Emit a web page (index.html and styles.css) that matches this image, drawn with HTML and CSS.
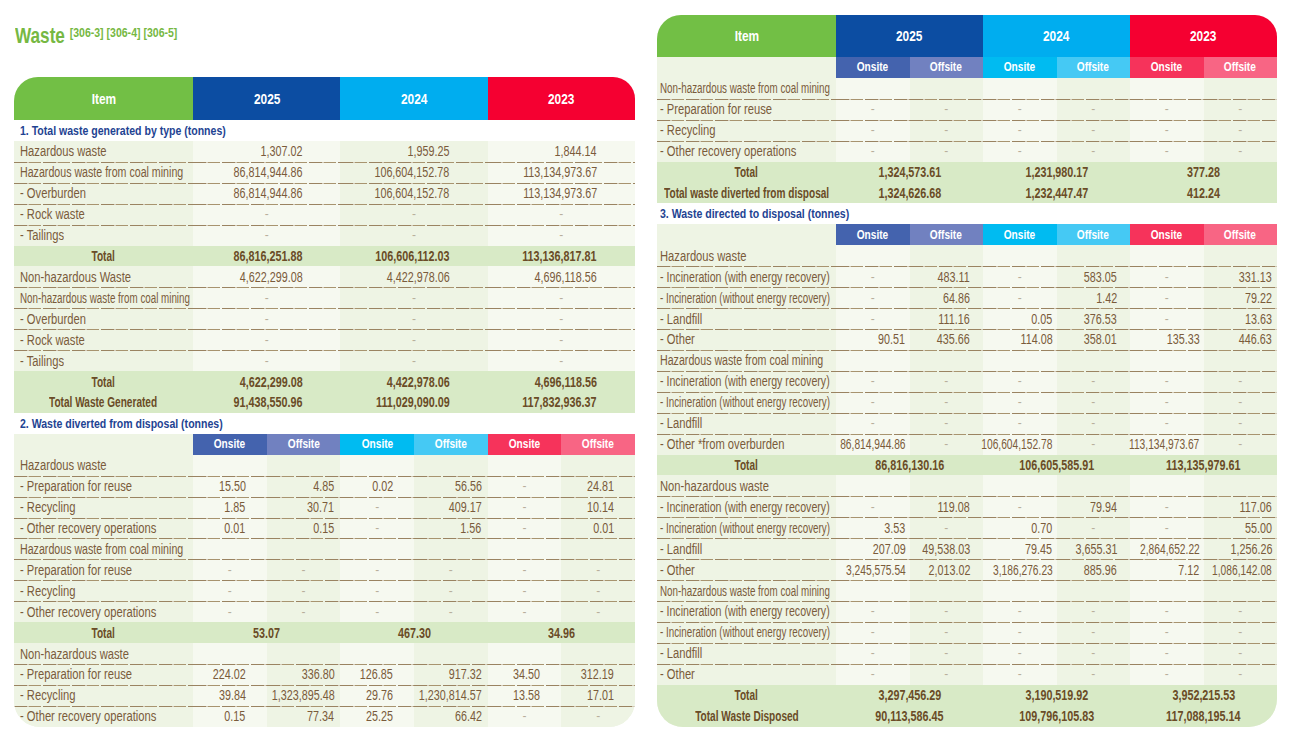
FILE: index.html
```html
<!DOCTYPE html>
<html lang="en">
<head>
<meta charset="utf-8">
<title>Waste</title>
<link rel="stylesheet" href="styles.css">
</head>
<body>
<div class="page">
  <div class="left">
    <h1 class="title"><span>Waste <small class="refs">[306-3] [306-4] [306-5]</small></span></h1>
    <div class="tbl tl">
      <div class="r hd">
        <div class="c hi"><span>Item</span></div><div class="c s2 y25"><span>2025</span></div><div class="c s2 y24"><span>2024</span></div><div class="c s2 y23"><span>2023</span></div>
      </div>
      <div class="r sec"><div class="c s7"><span>1. Total waste generated by type (tonnes)</span></div></div>
      <div class="r d"><div class="c it"><span>Hazardous waste</span></div><div class="c s2 l n1"><span>1,307.02</span></div><div class="c s2 k n1"><span>1,959.25</span></div><div class="c s2 l n1"><span>1,844.14</span></div></div>
      <div class="r d"><div class="c it sq2"><span>Hazardous waste from coal mining</span></div><div class="c s2 l n1"><span>86,814,944.86</span></div><div class="c s2 k n1"><span>106,604,152.78</span></div><div class="c s2 l n1"><span>113,134,973.67</span></div></div>
      <div class="r d"><div class="c it"><span>- Overburden</span></div><div class="c s2 l n1"><span>86,814,944.86</span></div><div class="c s2 k n1"><span>106,604,152.78</span></div><div class="c s2 l n1"><span>113,134,973.67</span></div></div>
      <div class="r d"><div class="c it"><span>- Rock waste</span></div><div class="c s2 l z">-</div><div class="c s2 k z">-</div><div class="c s2 l z">-</div></div>
      <div class="r d"><div class="c it"><span>- Tailings</span></div><div class="c s2 l z">-</div><div class="c s2 k z">-</div><div class="c s2 l z">-</div></div>
      <div class="r t"><div class="c it"><span>Total</span></div><div class="c s2 n1"><span>86,816,251.88</span></div><div class="c s2 n1"><span>106,606,112.03</span></div><div class="c s2 n1"><span>113,136,817.81</span></div></div>
      <div class="r d"><div class="c it"><span>Non-hazardous Waste</span></div><div class="c s2 l n1"><span>4,622,299.08</span></div><div class="c s2 k n1"><span>4,422,978.06</span></div><div class="c s2 l n1"><span>4,696,118.56</span></div></div>
      <div class="r d"><div class="c it sq"><span>Non-hazardous waste from coal mining</span></div><div class="c s2 l z">-</div><div class="c s2 k z">-</div><div class="c s2 l z">-</div></div>
      <div class="r d"><div class="c it"><span>- Overburden</span></div><div class="c s2 l z">-</div><div class="c s2 k z">-</div><div class="c s2 l z">-</div></div>
      <div class="r d"><div class="c it"><span>- Rock waste</span></div><div class="c s2 l z">-</div><div class="c s2 k z">-</div><div class="c s2 l z">-</div></div>
      <div class="r d"><div class="c it"><span>- Tailings</span></div><div class="c s2 l z">-</div><div class="c s2 k z">-</div><div class="c s2 l z">-</div></div>
      <div class="r t"><div class="c it"><span>Total</span></div><div class="c s2 n1"><span>4,622,299.08</span></div><div class="c s2 n1"><span>4,422,978.06</span></div><div class="c s2 n1"><span>4,696,118.56</span></div></div>
      <div class="r t"><div class="c it"><span>Total Waste Generated</span></div><div class="c s2 n1"><span>91,438,550.96</span></div><div class="c s2 n1"><span>111,029,090.09</span></div><div class="c s2 n1"><span>117,832,936.37</span></div></div>
      <div class="r sec"><div class="c s7"><span>2. Waste diverted from disposal (tonnes)</span></div></div>
      <div class="r sub"><div class="c it"></div><div class="c on25"><span>Onsite</span></div><div class="c off25"><span>Offsite</span></div><div class="c on24"><span>Onsite</span></div><div class="c off24"><span>Offsite</span></div><div class="c on23"><span>Onsite</span></div><div class="c off23"><span>Offsite</span></div></div>
      <div class="r d"><div class="c it"><span>Hazardous waste</span></div><div class="c l"></div><div class="c k"></div><div class="c l"></div><div class="c k"></div><div class="c l"></div><div class="c k"></div></div>
      <div class="r d"><div class="c it"><span>- Preparation for reuse</span></div><div class="c l pa"><span>15.50</span></div><div class="c k pb"><span>4.85</span></div><div class="c l pa"><span>0.02</span></div><div class="c k pb"><span>56.56</span></div><div class="c l z">-</div><div class="c k pa"><span>24.81</span></div></div>
      <div class="r d"><div class="c it"><span>- Recycling</span></div><div class="c l pa"><span>1.85</span></div><div class="c k pb"><span>30.71</span></div><div class="c l z">-</div><div class="c k pb"><span>409.17</span></div><div class="c l z">-</div><div class="c k pa"><span>10.14</span></div></div>
      <div class="r d"><div class="c it"><span>- Other recovery operations</span></div><div class="c l pa"><span>0.01</span></div><div class="c k pb"><span>0.15</span></div><div class="c l z">-</div><div class="c k pb"><span>1.56</span></div><div class="c l z">-</div><div class="c k pa"><span>0.01</span></div></div>
      <div class="r d"><div class="c it sq2"><span>Hazardous waste from coal mining</span></div><div class="c l"></div><div class="c k"></div><div class="c l"></div><div class="c k"></div><div class="c l"></div><div class="c k"></div></div>
      <div class="r d"><div class="c it"><span>- Preparation for reuse</span></div><div class="c l z">-</div><div class="c k z">-</div><div class="c l z">-</div><div class="c k z">-</div><div class="c l z">-</div><div class="c k z">-</div></div>
      <div class="r d"><div class="c it"><span>- Recycling</span></div><div class="c l z">-</div><div class="c k z">-</div><div class="c l z">-</div><div class="c k z">-</div><div class="c l z">-</div><div class="c k z">-</div></div>
      <div class="r d"><div class="c it"><span>- Other recovery operations</span></div><div class="c l z">-</div><div class="c k z">-</div><div class="c l z">-</div><div class="c k z">-</div><div class="c l z">-</div><div class="c k z">-</div></div>
      <div class="r t"><div class="c it"><span>Total</span></div><div class="c s2 ctr"><span>53.07</span></div><div class="c s2 ctr"><span>467.30</span></div><div class="c s2 ctr"><span>34.96</span></div></div>
      <div class="r d"><div class="c it"><span>Non-hazardous waste</span></div><div class="c l"></div><div class="c k"></div><div class="c l"></div><div class="c k"></div><div class="c l"></div><div class="c k"></div></div>
      <div class="r d"><div class="c it"><span>- Preparation for reuse</span></div><div class="c l pa"><span>224.02</span></div><div class="c k pb"><span>336.80</span></div><div class="c l pa"><span>126.85</span></div><div class="c k pb"><span>917.32</span></div><div class="c l pa"><span>34.50</span></div><div class="c k pa"><span>312.19</span></div></div>
      <div class="r d"><div class="c it"><span>- Recycling</span></div><div class="c l pa"><span>39.84</span></div><div class="c k pb"><span>1,323,895.48</span></div><div class="c l pa"><span>29.76</span></div><div class="c k pb"><span>1,230,814.57</span></div><div class="c l pa"><span>13.58</span></div><div class="c k pa"><span>17.01</span></div></div>
      <div class="r d"><div class="c it"><span>- Other recovery operations</span></div><div class="c l pa"><span>0.15</span></div><div class="c k pb"><span>77.34</span></div><div class="c l pa"><span>25.25</span></div><div class="c k pb"><span>66.42</span></div><div class="c l z">-</div><div class="c k z">-</div></div>
    </div>
  </div>

  <div class="right">
    <div class="tbl tr">
      <div class="r hd hd2">
        <div class="c hi"><span>Item</span></div><div class="c s2 y25"><span>2025</span></div><div class="c s2 y24"><span>2024</span></div><div class="c s2 y23"><span>2023</span></div>
      </div>
      <div class="r sub"><div class="c it"></div><div class="c on25"><span>Onsite</span></div><div class="c off25"><span>Offsite</span></div><div class="c on24"><span>Onsite</span></div><div class="c off24"><span>Offsite</span></div><div class="c on23"><span>Onsite</span></div><div class="c off23"><span>Offsite</span></div></div>
      <div class="r d"><div class="c it sq"><span>Non-hazardous waste from coal mining</span></div><div class="c l"></div><div class="c k"></div><div class="c l"></div><div class="c k"></div><div class="c l"></div><div class="c k"></div></div>
      <div class="r d"><div class="c it"><span>- Preparation for reuse</span></div><div class="c l z">-</div><div class="c k z">-</div><div class="c l z">-</div><div class="c k z">-</div><div class="c l z">-</div><div class="c k z">-</div></div>
      <div class="r d"><div class="c it"><span>- Recycling</span></div><div class="c l z">-</div><div class="c k z">-</div><div class="c l z">-</div><div class="c k z">-</div><div class="c l z">-</div><div class="c k z">-</div></div>
      <div class="r d"><div class="c it"><span>- Other recovery operations</span></div><div class="c l z">-</div><div class="c k z">-</div><div class="c l z">-</div><div class="c k z">-</div><div class="c l z">-</div><div class="c k z">-</div></div>
      <div class="r t"><div class="c it"><span>Total</span></div><div class="c s2 ctr"><span>1,324,573.61</span></div><div class="c s2 ctr"><span>1,231,980.17</span></div><div class="c s2 ctr"><span>377.28</span></div></div>
      <div class="r t"><div class="c it"><span>Total waste diverted from disposal</span></div><div class="c s2 ctr"><span>1,324,626.68</span></div><div class="c s2 ctr"><span>1,232,447.47</span></div><div class="c s2 ctr"><span>412.24</span></div></div>
      <div class="r sec"><div class="c s7"><span>3. Waste directed to disposal (tonnes)</span></div></div>
      <div class="r sub"><div class="c it"></div><div class="c on25"><span>Onsite</span></div><div class="c off25"><span>Offsite</span></div><div class="c on24"><span>Onsite</span></div><div class="c off24"><span>Offsite</span></div><div class="c on23"><span>Onsite</span></div><div class="c off23"><span>Offsite</span></div></div>
      <div class="r d"><div class="c it"><span>Hazardous waste</span></div><div class="c l"></div><div class="c k"></div><div class="c l"></div><div class="c k"></div><div class="c l"></div><div class="c k"></div></div>
      <div class="r d"><div class="c it sq2"><span>- Incineration (with energy recovery)</span></div><div class="c l z">-</div><div class="c k pd"><span>483.11</span></div><div class="c l z">-</div><div class="c k pd"><span>583.05</span></div><div class="c l z">-</div><div class="c k pe"><span>331.13</span></div></div>
      <div class="r d"><div class="c it sq"><span>- Incineration (without energy recovery)</span></div><div class="c l z">-</div><div class="c k pd"><span>64.86</span></div><div class="c l z">-</div><div class="c k pd"><span>1.42</span></div><div class="c l z">-</div><div class="c k pe"><span>79.22</span></div></div>
      <div class="r d"><div class="c it"><span>- Landfill</span></div><div class="c l z">-</div><div class="c k pd"><span>111.16</span></div><div class="c l pc"><span>0.05</span></div><div class="c k pd"><span>376.53</span></div><div class="c l z">-</div><div class="c k pe"><span>13.63</span></div></div>
      <div class="r d"><div class="c it"><span>- Other</span></div><div class="c l pc"><span>90.51</span></div><div class="c k pd"><span>435.66</span></div><div class="c l pc"><span>114.08</span></div><div class="c k pd"><span>358.01</span></div><div class="c l pc"><span>135.33</span></div><div class="c k pe"><span>446.63</span></div></div>
      <div class="r d"><div class="c it sq2"><span>Hazardous waste from coal mining</span></div><div class="c l"></div><div class="c k"></div><div class="c l"></div><div class="c k"></div><div class="c l"></div><div class="c k"></div></div>
      <div class="r d"><div class="c it sq2"><span>- Incineration (with energy recovery)</span></div><div class="c l z">-</div><div class="c k z">-</div><div class="c l z">-</div><div class="c k z">-</div><div class="c l z">-</div><div class="c k z">-</div></div>
      <div class="r d"><div class="c it sq"><span>- Incineration (without energy recovery)</span></div><div class="c l z">-</div><div class="c k z">-</div><div class="c l z">-</div><div class="c k z">-</div><div class="c l z">-</div><div class="c k z">-</div></div>
      <div class="r d"><div class="c it"><span>- Landfill</span></div><div class="c l z">-</div><div class="c k z">-</div><div class="c l z">-</div><div class="c k z">-</div><div class="c l z">-</div><div class="c k z">-</div></div>
      <div class="r d"><div class="c it"><span>- Other *from overburden</span></div><div class="c l pc nq"><span>86,814,944.86</span></div><div class="c k z">-</div><div class="c l pc nq"><span>106,604,152.78</span></div><div class="c k z">-</div><div class="c l pc nq"><span>113,134,973.67</span></div><div class="c k z">-</div></div>
      <div class="r t"><div class="c it"><span>Total</span></div><div class="c s2 ctr"><span>86,816,130.16</span></div><div class="c s2 ctr"><span>106,605,585.91</span></div><div class="c s2 ctr"><span>113,135,979.61</span></div></div>
      <div class="r d"><div class="c it"><span>Non-hazardous waste</span></div><div class="c l"></div><div class="c k"></div><div class="c l"></div><div class="c k"></div><div class="c l"></div><div class="c k"></div></div>
      <div class="r d"><div class="c it sq2"><span>- Incineration (with energy recovery)</span></div><div class="c l z">-</div><div class="c k pd"><span>119.08</span></div><div class="c l z">-</div><div class="c k pd"><span>79.94</span></div><div class="c l z">-</div><div class="c k pe"><span>117.06</span></div></div>
      <div class="r d"><div class="c it sq"><span>- Incineration (without energy recovery)</span></div><div class="c l pc"><span>3.53</span></div><div class="c k z">-</div><div class="c l pc"><span>0.70</span></div><div class="c k z">-</div><div class="c l z">-</div><div class="c k pe"><span>55.00</span></div></div>
      <div class="r d"><div class="c it"><span>- Landfill</span></div><div class="c l pc"><span>207.09</span></div><div class="c k pd"><span>49,538.03</span></div><div class="c l pc"><span>79.45</span></div><div class="c k pd"><span>3,655.31</span></div><div class="c l pc nq"><span>2,864,652.22</span></div><div class="c k pe"><span>1,256.26</span></div></div>
      <div class="r d"><div class="c it"><span>- Other</span></div><div class="c l pc nq"><span>3,245,575.54</span></div><div class="c k pd"><span>2,013.02</span></div><div class="c l pc nq"><span>3,186,276.23</span></div><div class="c k pd"><span>885.96</span></div><div class="c l pc"><span>7.12</span></div><div class="c k pe nq"><span>1,086,142.08</span></div></div>
      <div class="r d"><div class="c it sq"><span>Non-hazardous waste from coal mining</span></div><div class="c l"></div><div class="c k"></div><div class="c l"></div><div class="c k"></div><div class="c l"></div><div class="c k"></div></div>
      <div class="r d"><div class="c it sq2"><span>- Incineration (with energy recovery)</span></div><div class="c l z">-</div><div class="c k z">-</div><div class="c l z">-</div><div class="c k z">-</div><div class="c l z">-</div><div class="c k z">-</div></div>
      <div class="r d"><div class="c it sq"><span>- Incineration (without energy recovery)</span></div><div class="c l z">-</div><div class="c k z">-</div><div class="c l z">-</div><div class="c k z">-</div><div class="c l z">-</div><div class="c k z">-</div></div>
      <div class="r d"><div class="c it"><span>- Landfill</span></div><div class="c l z">-</div><div class="c k z">-</div><div class="c l z">-</div><div class="c k z">-</div><div class="c l z">-</div><div class="c k z">-</div></div>
      <div class="r d"><div class="c it"><span>- Other</span></div><div class="c l z">-</div><div class="c k z">-</div><div class="c l z">-</div><div class="c k z">-</div><div class="c l z">-</div><div class="c k z">-</div></div>
      <div class="r t"><div class="c it"><span>Total</span></div><div class="c s2 ctr"><span>3,297,456.29</span></div><div class="c s2 ctr"><span>3,190,519.92</span></div><div class="c s2 ctr"><span>3,952,215.53</span></div></div>
      <div class="r t"><div class="c it"><span>Total Waste Disposed</span></div><div class="c s2 ctr"><span>90,113,586.45</span></div><div class="c s2 ctr"><span>109,796,105.83</span></div><div class="c s2 ctr"><span>117,088,195.14</span></div></div>
    </div>
  </div>
</div>
</body>
</html>
```

FILE: styles.css
```css
* { box-sizing: border-box; }

body {
  margin: 0;
  background: #ffffff;
  font-family: "Liberation Sans", Arial, sans-serif;
  color: #7a5b3b;
}

.page {
  display: flex;
  align-items: flex-start;
  gap: 22px;
  padding: 15px 0 0 14px;
}

.left { width: 621px; display: flex; flex-direction: column; }
.right { width: 620px; }

/* page title */
.title {
  height: 62px;
  margin: 0;
  padding: 4px 0 0 1px;
  font-size: 22px;
  line-height: 28px;
  font-weight: bold;
  color: #76b843;
  white-space: nowrap;
}
.title > span {
  display: inline-block;
  transform: scaleX(0.78);
  transform-origin: left center;
}
.title .refs {
  font-size: 13.5px;
  vertical-align: 6px;
}

/* table frame */
.tbl {
  overflow: hidden;
  background: #eef4e4;
}
.tl { border-radius: 24px 22px 26px 26px; }
.tr { border-radius: 24px 22px 28px 26px; }

.r {
  display: grid;
  grid-template-columns: 179px repeat(6, 1fr);
  height: 20.93px;
}

.c {
  min-width: 0;
  display: flex;
  align-items: center;
  font-size: 14px;
  white-space: nowrap;
  overflow: visible;
}
.c > span {
  display: inline-block;
  transform: scaleX(0.8);
  transform-origin: left center;
}

.s2 { grid-column: span 2; }
.s7 { grid-column: 1 / -1; }

/* item column */
.it { background: #eef4e4; padding-left: 6px; }
.tr .it { padding-left: 3px; }
.sq > span { transform: scaleX(0.7); }
.sq2 > span { transform: scaleX(0.76); }

/* value columns */
.l { background-color: #f6f9f0; }
.k { background-color: #eef4e4; }

.n1, .pa, .pb, .pc, .pd, .pe { justify-content: flex-end; }
.n1 > span, .pa > span, .pb > span, .pc > span, .pd > span, .pe > span {
  transform: scaleX(0.77);
  transform-origin: right center;
}
.nq > span { transform: scaleX(0.73); }
.n1 { padding-right: 38px; }
.pa { padding-right: 21px; }
.pb { padding-right: 6px; }
.pc { padding-right: 4px; }
.pd { padding-right: 13px; }
.pe { padding-right: 5px; }
.z { justify-content: center; color: #b8ae9c; font-size: 12px; }
.ctr { justify-content: center; }
.ctr > span { transform: scaleX(0.77); transform-origin: center; }

/* header */
.hd { height: 43px; }
.hd2 { height: 42px; }
.hd .c {
  color: #ffffff;
  font-weight: bold;
  font-size: 14.5px;
  justify-content: center;
}
.hd .c > span { transform: scaleX(0.82); transform-origin: center; }
.hi { background: #72bf45; }
.y25 { background: #0c4da2; }
.y24 { background: #00adef; }
.y23 { background: #f50031; }

/* sub header */
.sub .c:not(.it) {
  color: #ffffff;
  font-weight: bold;
  font-size: 12.5px;
  justify-content: center;
}
.sub .c > span { transform: scaleX(0.81); transform-origin: center; }
.on25 { background: #4463ae; }
.off25 { background: #7181c0; }
.on24 { background: #00bbf1; }
.off24 { background: #45c9f4; }
.on23 { background: #f6335b; }
.off23 { background: #f86584; }

/* section titles */
.sec { background: #ffffff; }
.sec .c {
  background: #ffffff;
  color: #1e4392;
  font-weight: bold;
  font-size: 13.5px;
  padding-left: 6px;
}
.sec .c > span { transform: scaleX(0.78); }
.tr .sec .c { padding-left: 3px; }

/* totals */
.t { background: #d8eac6; }
.t .c {
  background: transparent;
  font-weight: bold;
  color: #6a4c27;
}
.t .it { justify-content: center; padding-left: 0; }
.t .it > span { transform: scaleX(0.72); transform-origin: center; }

/* separators between consecutive data rows */
.d + .d > .c {
  background-image: repeating-linear-gradient(90deg,
    #9a8361 0 13px, #d2c8b6 13px 15px, #a8946f 15px 27px, rgba(255,255,255,0) 27px 29px);
  background-size: 100% 1px;
  background-repeat: no-repeat;
  background-position: 0 0;
}
```
